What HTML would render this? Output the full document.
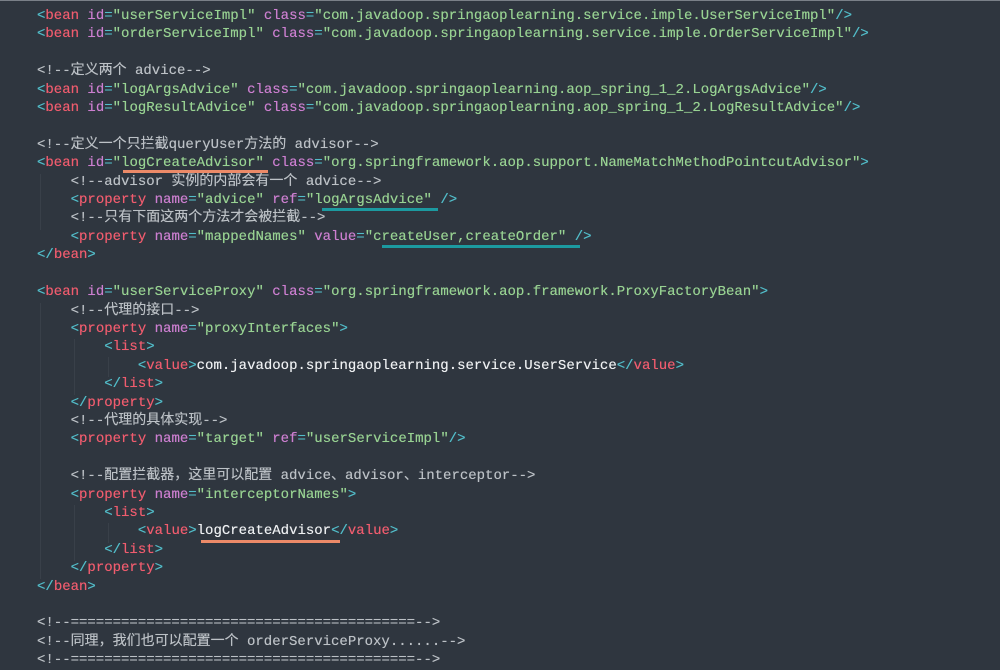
<!DOCTYPE html>
<html><head><meta charset="utf-8"><style>
html,body{margin:0;padding:0;}
body{width:1000px;height:670px;background:#2f363f;overflow:hidden;position:relative;}
.top{position:absolute;left:0;top:0;width:1000px;height:1px;background:#7a8088}
pre{margin:0;position:absolute;left:37px;top:7px;font-family:"Liberation Mono","Noto Sans CJK SC",monospace;font-size:14px;line-height:18.4px;color:#eef0f2;text-shadow:0 0 0.4px currentColor;}
.b{color:#52bdc9}.t{color:#f05c6e}.a{color:#cc7fd0}.s{color:#98d292}.c{color:#bcc1c6}
.u{position:absolute;height:3px;z-index:5}
.o{background:#ec8a68}.g{background:#1c9aa0}
.ig{position:absolute;width:1px;background:#394049}
</style></head><body>
<div class="top"></div>
<div class="ig" style="left:40px;top:174px;height:56px"></div>
<div class="ig" style="left:40px;top:303px;height:276px"></div>
<div class="ig" style="left:74px;top:339px;height:56px"></div>
<div class="ig" style="left:74px;top:505px;height:56px"></div>
<div class="ig" style="left:108px;top:357px;height:20px"></div>
<div class="ig" style="left:108px;top:523px;height:20px"></div>
<pre><span class="b">&lt;</span><span class="t">bean</span> <span class="a">id</span><span class="b">=</span><span class="s">"userServiceImpl"</span> <span class="a">class</span><span class="b">=</span><span class="s">"com.javadoop.springaoplearning.service.imple.UserServiceImpl"</span><span class="b">/&gt;</span>
<span class="b">&lt;</span><span class="t">bean</span> <span class="a">id</span><span class="b">=</span><span class="s">"orderServiceImpl"</span> <span class="a">class</span><span class="b">=</span><span class="s">"com.javadoop.springaoplearning.service.imple.OrderServiceImpl"</span><span class="b">/&gt;</span>

<span class="c">&lt;!--定义两个 advice--&gt;</span>
<span class="b">&lt;</span><span class="t">bean</span> <span class="a">id</span><span class="b">=</span><span class="s">"logArgsAdvice"</span> <span class="a">class</span><span class="b">=</span><span class="s">"com.javadoop.springaoplearning.aop_spring_1_2.LogArgsAdvice"</span><span class="b">/&gt;</span>
<span class="b">&lt;</span><span class="t">bean</span> <span class="a">id</span><span class="b">=</span><span class="s">"logResultAdvice"</span> <span class="a">class</span><span class="b">=</span><span class="s">"com.javadoop.springaoplearning.aop_spring_1_2.LogResultAdvice"</span><span class="b">/&gt;</span>

<span class="c">&lt;!--定义一个只拦截queryUser方法的 advisor--&gt;</span>
<span class="b">&lt;</span><span class="t">bean</span> <span class="a">id</span><span class="b">=</span><span class="s">"logCreateAdvisor"</span> <span class="a">class</span><span class="b">=</span><span class="s">"org.springframework.aop.support.NameMatchMethodPointcutAdvisor"</span><span class="b">&gt;</span>
    <span class="c">&lt;!--advisor 实例的内部会有一个 advice--&gt;</span>
    <span class="b">&lt;</span><span class="t">property</span> <span class="a">name</span><span class="b">=</span><span class="s">"advice"</span> <span class="a">ref</span><span class="b">=</span><span class="s">"logArgsAdvice"</span> <span class="b">/&gt;</span>
    <span class="c">&lt;!--只有下面这两个方法才会被拦截--&gt;</span>
    <span class="b">&lt;</span><span class="t">property</span> <span class="a">name</span><span class="b">=</span><span class="s">"mappedNames"</span> <span class="a">value</span><span class="b">=</span><span class="s">"createUser,createOrder"</span> <span class="b">/&gt;</span>
<span class="b">&lt;/</span><span class="t">bean</span><span class="b">&gt;</span>

<span class="b">&lt;</span><span class="t">bean</span> <span class="a">id</span><span class="b">=</span><span class="s">"userServiceProxy"</span> <span class="a">class</span><span class="b">=</span><span class="s">"org.springframework.aop.framework.ProxyFactoryBean"</span><span class="b">&gt;</span>
    <span class="c">&lt;!--代理的接口--&gt;</span>
    <span class="b">&lt;</span><span class="t">property</span> <span class="a">name</span><span class="b">=</span><span class="s">"proxyInterfaces"</span><span class="b">&gt;</span>
        <span class="b">&lt;</span><span class="t">list</span><span class="b">&gt;</span>
            <span class="b">&lt;</span><span class="t">value</span><span class="b">&gt;</span>com.javadoop.springaoplearning.service.UserService<span class="b">&lt;/</span><span class="t">value</span><span class="b">&gt;</span>
        <span class="b">&lt;/</span><span class="t">list</span><span class="b">&gt;</span>
    <span class="b">&lt;/</span><span class="t">property</span><span class="b">&gt;</span>
    <span class="c">&lt;!--代理的具体实现--&gt;</span>
    <span class="b">&lt;</span><span class="t">property</span> <span class="a">name</span><span class="b">=</span><span class="s">"target"</span> <span class="a">ref</span><span class="b">=</span><span class="s">"userServiceImpl"</span><span class="b">/&gt;</span>

    <span class="c">&lt;!--配置拦截器，这里可以配置 advice、advisor、interceptor--&gt;</span>
    <span class="b">&lt;</span><span class="t">property</span> <span class="a">name</span><span class="b">=</span><span class="s">"interceptorNames"</span><span class="b">&gt;</span>
        <span class="b">&lt;</span><span class="t">list</span><span class="b">&gt;</span>
            <span class="b">&lt;</span><span class="t">value</span><span class="b">&gt;</span>logCreateAdvisor<span class="b">&lt;/</span><span class="t">value</span><span class="b">&gt;</span>
        <span class="b">&lt;/</span><span class="t">list</span><span class="b">&gt;</span>
    <span class="b">&lt;/</span><span class="t">property</span><span class="b">&gt;</span>
<span class="b">&lt;/</span><span class="t">bean</span><span class="b">&gt;</span>

<span class="c">&lt;!--=========================================--&gt;</span>
<span class="c">&lt;!--同理，我们也可以配置一个 orderServiceProxy......--&gt;</span>
<span class="c">&lt;!--=========================================--&gt;</span></pre>
<div class="u o" style="left:123px;top:170px;width:145px"></div>
<div class="u g" style="left:322px;top:208px;width:116px"></div>
<div class="u g" style="left:382px;top:245px;width:198px"></div>
<div class="u o" style="left:201px;top:540px;width:139px"></div>
</body></html>
